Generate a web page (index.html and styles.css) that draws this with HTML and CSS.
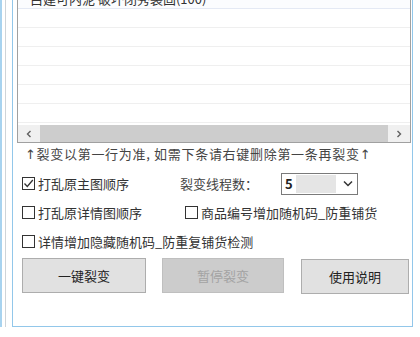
FILE: index.html
```html
<!DOCTYPE html>
<html lang="zh-CN">
  <head>
    <meta charset="UTF-8" />
    <title>裂变</title>
    <link rel="stylesheet" href="styles.css">
  </head>
  <body>
    <div class="frame">
      <div class="frame-inner">
        <div class="group">
          <div class="list">
            <div class="rows">
              <div class="row first">白建可内泥 破坏闭秀装固(100)</div>
              <div class="row"></div>
              <div class="row"></div>
              <div class="row"></div>
              <div class="row"></div>
              <div class="row"></div>
              <div class="row"></div>
            </div>
            <div class="hscroll">
              <div class="arrow">
                <svg width="8" height="8" viewBox="0 0 8 8"><polyline points="5.5,1 2.5,4 5.5,7" fill="none" stroke="#606060" stroke-width="1.4"/></svg>
              </div>
              <div class="thumb"></div>
              <div class="arrow">
                <svg width="8" height="8" viewBox="0 0 8 8"><polyline points="2.5,1 5.5,4 2.5,7" fill="none" stroke="#606060" stroke-width="1.4"/></svg>
              </div>
            </div>
          </div>

          <div class="hint"><span class="up">↑</span>裂变以第一行为准, 如需下条请右键删除第一条再裂变<span class="up">↑</span></div>

          <div class="opt-row">
            <label class="chk col-a">
              <span class="box">
                <svg width="11" height="11" viewBox="0 0 11 11"><polyline points="1.5,5.5 4.3,8.5 9.8,2" fill="none" stroke="#333" stroke-width="1.3"/></svg>
              </span>
              打乱原主图顺序
            </label>
            <span class="threads-label">裂变线程数：</span>
            <div class="combo">
              <span class="combo-val">5</span>
              <span class="combo-sel"></span>
              <svg class="combo-arrow" width="10" height="7" viewBox="0 0 10 7"><polyline points="1,1.5 5,5.5 9,1.5" fill="none" stroke="#333" stroke-width="1.5"/></svg>
            </div>
          </div>

          <div class="opt-row">
            <label class="chk col-b"><span class="box"></span>打乱原详情图顺序</label>
            <label class="chk"><span class="box"></span>商品编号增加随机码_防重铺货</label>
          </div>

          <div class="opt-row">
            <label class="chk"><span class="box"></span>详情增加隐藏随机码_防重复铺货检测</label>
          </div>

          <div class="btn-row">
            <button class="btn btn-start">一键裂变</button>
            <button class="btn btn-pause" disabled>暂停裂变</button>
            <button class="btn btn-help">使用说明</button>
          </div>
        </div>
      </div>
    </div>
  </body>
</html>
```
FILE: styles.css
```css
body {
  margin: 0;
  width: 420px;
  height: 337px;
  overflow: hidden;
  background-color: #fff;
  font-family: "Noto Sans CJK SC", "Microsoft YaHei", sans-serif;
  font-size: 13px;
  color: #333;
}

.frame {
  height: 337px;
  border-left: 2px solid #a8d3ef;
}

.frame-inner {
  height: 337px;
  margin-left: 3px;
  border-left: 1px solid #cfd4d8;
  padding-left: 6px;
}

.group {
  box-sizing: border-box;
  width: 401px;
  border: 1px solid #92c7ea;
  border-top: none;
  padding: 0 1px 32px 4px;
}

.list {
  width: 392px;
  margin-top: -10px;
  border: 1px solid #a0a0a0;
  border-top: none;
}

.rows {
  height: 135px;
  overflow: hidden;
  background-color: #fff;
}

.row {
  height: 18px;
  line-height: 18px;
  border-bottom: 1px solid #efefef;
  padding-left: 12px;
  white-space: nowrap;
}

.row.first {
  background-color: #fbfcfe;
  border-bottom-color: #e4e9f4;
}

.hscroll {
  display: flex;
  height: 17px;
  background-color: #f0f0f0;
}

.arrow {
  width: 22px;
  display: flex;
  align-items: center;
  justify-content: center;
}

.thumb {
  flex: 1;
  background-color: #cdcdcd;
}

.hint {
  height: 22px;
  line-height: 22px;
  padding-left: 8px;
  color: #444;
  white-space: nowrap;
  letter-spacing: 0.7px;
  margin-bottom: 4px;
}

.hint .up {
  font-family: "DejaVu Sans", sans-serif;
  color: #444;
}

.opt-row {
  display: flex;
  align-items: center;
  height: 29px;
  padding-left: 5px;
  white-space: nowrap;
}

.chk {
  display: flex;
  align-items: center;
}

.col-a {
  width: 158px;
}

.col-b {
  width: 163px;
}

.box {
  box-sizing: border-box;
  width: 13px;
  height: 13px;
  border: 1px solid #333;
  background-color: #fff;
  margin-right: 3px;
  display: flex;
  align-items: center;
  justify-content: center;
}

.threads-label {
  color: #444;
}

.combo {
  box-sizing: border-box;
  width: 77px;
  height: 22px;
  margin-left: 23px;
  border: 1px solid #7a7a7a;
  display: flex;
  align-items: center;
}

.combo-val {
  width: 11px;
  padding-left: 3px;
  font-weight: bold;
  color: #222;
}

.combo-sel {
  width: 40px;
  height: 18px;
  background-color: #e5e5e5;
}

.combo-arrow {
  margin-left: 7px;
}

.btn-row {
  display: flex;
  margin-top: 2px;
  padding-left: 5px;
}

.btn {
  height: 35px;
  background-color: #e1e1e1;
  border: 1px solid #adadad;
  font-family: inherit;
  font-size: 13px;
  color: #222;
  padding: 0;
}

.btn-start {
  width: 124px;
}

.btn-pause {
  width: 122px;
  margin-left: 16px;
  background-color: #cccccc;
  border-color: #bfbfbf;
  color: #a3a3a3;
}

.btn-help {
  width: 108px;
  margin-left: 17px;
  margin-top: 1px;
}
```
